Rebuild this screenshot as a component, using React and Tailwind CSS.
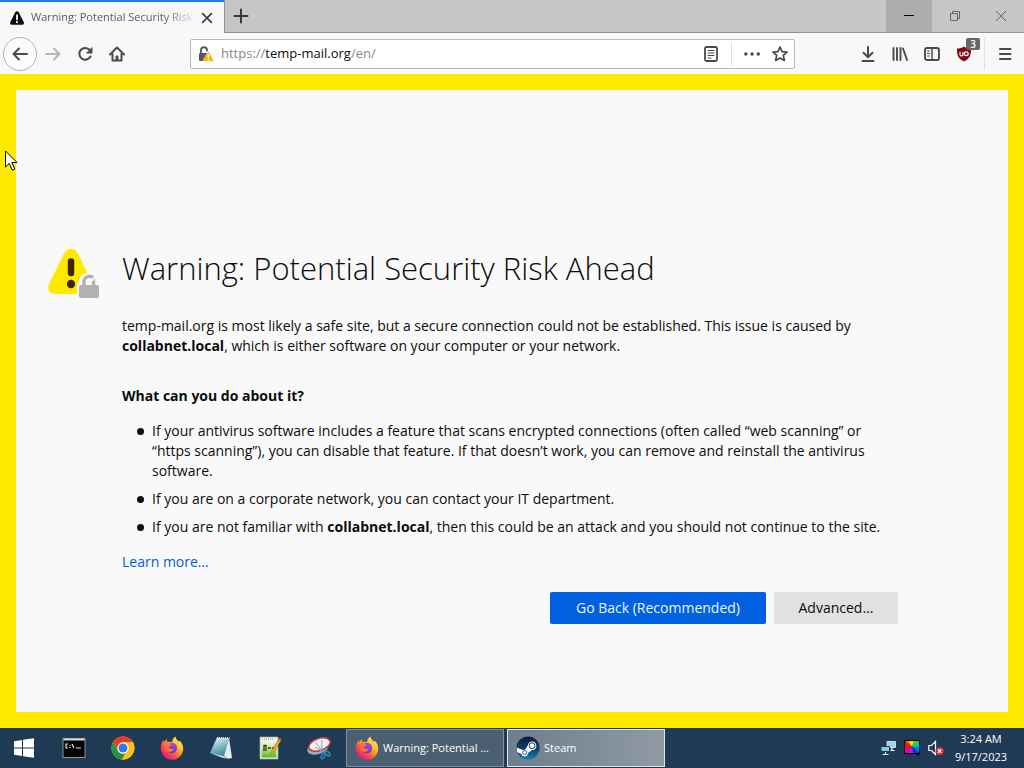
const TASKBAR_ICONS = [
    { label: 'Command Prompt', Icon: TerminalIcon },
    { label: 'Google Chrome', Icon: ChromeIcon },
    { label: 'Firefox', Icon: FirefoxIcon },
    { label: 'Notepad', Icon: NotepadIcon },
    { label: 'Notepad++', Icon: NotepadPlusIcon },
    { label: 'Snipping Tool', Icon: SnipIcon },
];

/* ---------- toolbar icons, drawn on a 16px grid ---------- */

function Glyph({ children, size = 'size-4' }) {
    return (
        <svg viewBox="0 0 16 16" className={size} fill="none" stroke="currentColor" strokeWidth="2" strokeLinecap="round" strokeLinejoin="round" aria-hidden="true">
            {children}
        </svg>
    );
}

function BlackWarningIcon() {
    return (
        <svg viewBox="0 0 16 16" className="size-4 shrink-0" aria-hidden="true">
            <path d="M8 1.200c.8 0 1.300.4 1.700 1.100l5 9.800c.7 1.400-.1 2.700-1.600 2.700H2.900c-1.500 0-2.300-1.300-1.600-2.700l5-9.800C6.700 1.600 7.200 1.200 8 1.200z" fill="#0c0c0d" />
            <path d="M8 5.200v4.200" stroke="#fff" strokeWidth="1.800" strokeLinecap="round" />
            <circle cx="8" cy="12.200" r="1.100" fill="#fff" />
        </svg>
    );
}

function LockWarningIcon() {
    return (
        <svg viewBox="0 0 16 16" className="size-4 shrink-0" aria-hidden="true">
            <path d="M3 8V4.400a3 3 0 0 1 6-.4v1.300" fill="none" stroke="#55595c" strokeWidth="1.900" />
            <rect x="1" y="7" width="9" height="8" rx="1.200" fill="#55595c" />
            <path d="M10.300 5.200 15.600 14.200q.3 1.100-.7 1.100H5.700q-1 0-.6-1.100z" fill="#f9b208" stroke="#f9f9fa" strokeWidth=".4" />
            <path d="M10.300 8.600v3" stroke="#fff" strokeWidth="1.400" strokeLinecap="round" />
            <circle cx="10.300" cy="13.500" r=".8" fill="#fff" />
        </svg>
    );
}

function ShieldIcon() {
    return (
        <svg viewBox="0 0 16 16" className="size-4" aria-hidden="true">
            <path d="M8 .6C6.200 2 3.600 2.600 1 2.600c0 6.200.6 9.800 7 13 6.400-3.200 7-6.800 7-13C12.400 2.600 9.800 2 8 .6z" fill="#800610" />
            <path d="M4 5.800v2.600a1.500 1.500 0 0 0 3 0V5.800" fill="none" stroke="#fff" strokeWidth="1.200" />
            <circle cx="10.300" cy="7.800" r="1.900" fill="none" stroke="#fff" strokeWidth="1.200" />
        </svg>
    );
}

/* ---------- page icon ---------- */

function InsecureSiteIcon() {
    return (
        <svg viewBox="0 0 52 52" className="size-[52px] shrink-0" aria-hidden="true">
            <path d="M23 1c3.400 0 5.300 1.400 6.800 4.200l14.800 30.600C47 41 44.500 46 39 46H7c-5.800 0-8.400-5-5.800-10.200L16.200 5.200C17.700 2.400 19.600 1 23 1z" fill="#ffe900" />
            <path d="M23 13.500v11.500" stroke="#3e2800" strokeWidth="6.500" strokeLinecap="round" />
            <circle cx="23" cy="36" r="4.200" fill="#3e2800" />
            <path d="M29 53V37q0-2.500 2-3c0-5 4-9.500 10-9.500S51 28 51 34l3 3v16z" fill="#f9f9fa" />
            <path d="M36 38v-4.300a5.500 5.500 0 0 1 9-4.200" fill="none" stroke="#b1b1b3" strokeWidth="3.400" />
            <path d="M43.500 33.500q2.500 0 3-3.500.8 1.500.8 3.500v4h-3z" fill="#b1b1b3" />
            <rect x="31" y="37" width="20" height="13" rx="2" fill="#b1b1b3" />
        </svg>
    );
}

function Cursor() {
    return (
        <svg viewBox="0 0 13 21" className="absolute left-[5px] top-[76px] z-10 h-[21px] w-[13px]" aria-hidden="true">
            <path d="M.5 1v16l3.700-3.600 3 6.700 2.600-1.100-3-6.500h5.200z" fill="#fff" stroke="#000" />
        </svg>
    );
}

/* ---------- taskbar icons ---------- */

function WindowsIcon() {
    return (
        <svg viewBox="0 0 22 22" className="size-[22px]" fill="#fff" aria-hidden="true">
            <path d="M1 4.200 9 3v7.500H1zM10 2.800 21 1.200v9.300H10zM1 11.500h8V19l-8-1.200zM10 11.500h11v9.300l-11-1.600z" />
        </svg>
    );
}

function TerminalIcon() {
    return (
        <svg viewBox="0 0 24 24" className="size-6" aria-hidden="true">
            <rect x="1" y="2.500" width="22" height="19" fill="#050505" stroke="#8c959c" />
            <path d="M1.500 3.500h21" stroke="#cfd6da" strokeWidth="2" />
            <path d="M6 8H4v4h2M8 9v1M8 11v1M10 8l2 4M14 12h5" fill="none" stroke="#e5e5e5" strokeWidth="1.200" />
        </svg>
    );
}

function ChromeIcon() {
    return (
        <svg viewBox="0 0 24 24" className="size-6" aria-hidden="true">
            <circle cx="12" cy="12" r="11.500" fill="#fbc116" />
            <path d="M2 6.300A11.500 11.500 0 0 1 22 6.300H12L7 14.800z" fill="#e33b2e" />
            <path d="M2 6.300 7 14.900c1.300 2 3 3 5 2.900l2-.4-3 6.100A11.500 11.500 0 0 1 2 6.300z" fill="#229342" />
            <path d="M12 6.300h10c2.700 5.200 1.200 11-3 14.500a11.500 11.500 0 0 1-8 2.700l6-8.600z" fill="#fbc116" />
            <circle cx="12" cy="12" r="5.700" fill="#fff" />
            <circle cx="12" cy="12" r="4.500" fill="#3478e5" />
        </svg>
    );
}

function FirefoxIcon() {
    return (
        <svg viewBox="0 0 24 24" className="size-6 shrink-0" aria-hidden="true">
            <defs>
                <linearGradient id="fox" x1=".85" y1=".1" x2=".2" y2=".9">
                    <stop offset="0" stopColor="#fff44f" />
                    <stop offset=".35" stopColor="#ffb02e" />
                    <stop offset=".65" stopColor="#ff5b36" />
                    <stop offset="1" stopColor="#e31587" />
                </linearGradient>
                <linearGradient id="globe" x1=".7" y1="0" x2=".3" y2="1">
                    <stop offset="0" stopColor="#a14df0" />
                    <stop offset="1" stopColor="#5b3bb8" />
                </linearGradient>
            </defs>
            <path d="M15.500.5c.2 2.500 2 3.700 3.700 5.600l.3-1.600c3 3 4.200 6.500 3.600 10A11.200 11.200 0 0 1 1 14.500C.3 10.500 1.400 7 3.500 4l.6 2.200L6.500 3l.8 3c1.600-.5 3.500-.3 4.800.2C12 3.800 13.500 1.800 15.500.5z" fill="url(#fox)" />
            <circle cx="12" cy="12" r="5.200" fill="url(#globe)" />
            <path d="M5 7.500c2-1 4.700-.6 6.500 1.500-.6 1.200-2 1.200-2.900 1.800.2 2 2.900 2.800 5.200 1.900-1 3.400-5 4.200-7.500 2.100C4.500 13 4.200 10 5 7.500z" fill="#ff7139" />
            <path d="M14 6c3 1 4.800 3.700 4.400 7.200 1.200-1 1.500-3.500.6-5.500L15.500 4z" fill="#ffcc38" />
        </svg>
    );
}

function NotepadIcon() {
    return (
        <svg viewBox="0 0 24 24" className="size-6" aria-hidden="true">
            <defs>
                <linearGradient id="pad" x1=".3" y1="0" x2=".7" y2="1">
                    <stop offset="0" stopColor="#d4eff4" />
                    <stop offset=".55" stopColor="#79b3c0" />
                    <stop offset="1" stopColor="#42818f" />
                </linearGradient>
            </defs>
            <path d="m20 2 3 20-4 .8L14 19z" fill="#e4edef" />
            <path d="M8 1.500 20.500 2 15 20 1 17z" fill="url(#pad)" />
            <path d="m1 17 14 3 4 2.800-6-1z" fill="#c1d9df" />
            <path d="M8 2h12.500" stroke="#e8f1f3" strokeWidth="1.500" strokeDasharray="1 1" />
        </svg>
    );
}

function NotepadPlusIcon() {
    return (
        <svg viewBox="0 0 24 24" className="size-6" aria-hidden="true">
            <defs>
                <linearGradient id="green" x1="0" y1="0" x2="0" y2="1">
                    <stop offset="0" stopColor="#f3f8e6" />
                    <stop offset=".4" stopColor="#c8e694" />
                    <stop offset="1" stopColor="#55b81f" />
                </linearGradient>
            </defs>
            <path d="M2 1h18v22H2z" fill="#f1f4ec" stroke="#9caf91" strokeWidth=".7" />
            <path d="M3.500 5h15v16.500h-15z" fill="url(#green)" />
            <path d="M4 3h12" stroke="#8c8c78" strokeDasharray="1 1" />
            <path d="M6 15V9.500h2V15M10 12h3M14 12h3" fill="none" stroke="#284018" strokeWidth="1.300" />
            <path d="m21.500 2 2 1.200-7 12.300-3 2 .6-3.200z" fill="#edaa2c" stroke="#9b6215" strokeWidth=".5" />
            <path d="m20.700 3.400 2 1.200 1-1.700-2-1.100z" fill="#c94b38" />
        </svg>
    );
}

function SnipIcon() {
    return (
        <svg viewBox="0 0 24 24" className="size-6" aria-hidden="true">
            <ellipse cx="11" cy="12" rx="11" ry="6" transform="rotate(-18 11 12)" fill="#9daeb8" />
            <ellipse cx="12.500" cy="8.500" rx="11" ry="6" transform="rotate(-18 12.500 8.500)" fill="#f5f5f5" stroke="#c8343c" strokeWidth="1.500" />
            <path d="m8 6 8 10M15 4l-.5 12M8 11l8 5" fill="none" stroke="#8995a0" strokeWidth="1" />
            <ellipse cx="16" cy="20" rx="1.600" ry="3" transform="rotate(25 16 20)" fill="none" stroke="#278dbb" strokeWidth="1.500" />
            <ellipse cx="20.500" cy="17.500" rx="1.600" ry="3" transform="rotate(-45 20.500 17.500)" fill="none" stroke="#278dbb" strokeWidth="1.500" />
        </svg>
    );
}

function SteamIcon() {
    return (
        <svg viewBox="0 0 24 24" className="size-6 shrink-0" aria-hidden="true">
            <defs>
                <linearGradient id="steam" x1="0" y1="0" x2="0" y2="1">
                    <stop offset="0" stopColor="#101d3f" />
                    <stop offset=".5" stopColor="#0b3a68" />
                    <stop offset="1" stopColor="#1584b8" />
                </linearGradient>
            </defs>
            <circle cx="12" cy="12" r="11.500" fill="url(#steam)" />
            <path d="m.7 11.500 6.600 2.700c.6-.4 1.200-.6 2-.6l2.500-4a4.300 4.300 0 1 1 4.200 4.500l-4 3a3.300 3.300 0 0 1-6.500.8l-4.300-1.800z" fill="#fff" />
            <circle cx="16.100" cy="9.700" r="2.900" fill="none" stroke="#173358" strokeWidth="1" />
            <circle cx="8.700" cy="16.600" r="2" fill="none" stroke="#173358" strokeWidth=".8" />
        </svg>
    );
}

function NetworkIcon() {
    return (
        <svg viewBox="0 0 16 16" className="size-4" aria-hidden="true">
            <path d="M7 1.500h8.500v6H7z" fill="#9fd2ef" stroke="#e6f2f8" strokeWidth=".8" />
            <path d="M1 6.500h8.500v5H1z" fill="#8dc8eb" stroke="#1f3a52" />
            <path d="M5.500 12v2M2.500 14.500h6M12 8v2M10.500 10.500h4" stroke="#fff" strokeWidth="1.200" />
        </svg>
    );
}

function ColorIcon() {
    return (
        <svg viewBox="0 0 16 16" className="size-4" aria-hidden="true">
            <path d="M0 0h16v14l-2 2-2-2H0z" fill="#080808" />
            <path d="M8 7 1 1h5z" fill="#ff7b00" />
            <path d="M8 7 5 1h5z" fill="#ffe600" />
            <path d="m8 7 2-6h5v2z" fill="#42d51c" />
            <path d="m8 7 7-5v6z" fill="#00c9a7" />
            <path d="m8 7 7 0v6z" fill="#0078ff" />
            <path d="m8 7 7 6H8z" fill="#2b1fe8" />
            <path d="m8 7 1 6H3z" fill="#bd18ed" />
            <path d="m8 7-5 6H1V8z" fill="#f000a0" />
            <path d="M8 7 1 9V1z" fill="#f31313" />
        </svg>
    );
}

function MutedIcon() {
    return (
        <svg viewBox="0 0 16 16" className="size-4" aria-hidden="true">
            <path d="M.8 5.500h2.700l4-4v13l-4-4H.8z" fill="none" stroke="#fff" strokeWidth="1.200" />
            <circle cx="11.700" cy="11" r="4.300" fill="#d32b3b" />
            <path d="m10 9.300 3.400 3.400m0-3.400L10 12.700" stroke="#fff" strokeWidth="1.300" />
        </svg>
    );
}

/* ---------- layout ---------- */

function ToolButton({ label, className = '', children }) {
    return (
        <button type="button" aria-label={label} className={`flex h-8 w-8 shrink-0 items-center justify-center ${className}`}>
            {children}
        </button>
    );
}

function TabBar() {
    return (
        <div className="flex h-[33px] bg-[#c6c6c6]">
            <div className="flex w-56 shrink-0 items-center border-t-2 border-[#1a7cf0] bg-[#f7f7f8] pl-[9px]">
                <BlackWarningIcon />
                <div className="ml-[6px] w-[166px] overflow-hidden whitespace-nowrap mask-r-from-80% text-[11px] text-[#5b5b5d]">
                    Warning: Potential Security Risk
                </div>
                <button type="button" aria-label="Close tab" className="ml-0.5 flex size-4 items-center justify-center text-[#3c3c3d]">
                    <Glyph size="size-3.5"><path d="m3 3 10 10M13 3 3 13" strokeWidth="1.900" /></Glyph>
                </button>
            </div>
            <div className="flex flex-1 border-b border-l border-[#929292]">
                <button type="button" aria-label="New tab" className="flex w-8 items-center justify-center text-[#38383a]">
                    <Glyph><path d="M8 1.500v13M1.500 8h13" /></Glyph>
                </button>
                <div className="ml-auto flex text-[#6c6471]">
                    <button type="button" aria-label="Minimize" className="flex w-[46px] items-center justify-center bg-[#adadad] text-black">
                        <svg viewBox="0 0 10 10" className="size-2.5"><path d="M0 4.500h10" stroke="currentColor" /></svg>
                    </button>
                    <button type="button" aria-label="Restore" className="flex w-[46px] items-center justify-center">
                        <svg viewBox="0 0 10 10" className="size-2.5" fill="none" stroke="currentColor"><path d="M.5 2.500h7v7h-7zM2.500 2.500v-2h7v7h-2" /></svg>
                    </button>
                    <button type="button" aria-label="Close" className="flex w-[46px] items-center justify-center">
                        <svg viewBox="0 0 10 10" className="size-2.5" fill="none" stroke="currentColor"><path d="m0 0 10 10M10 0 0 10" /></svg>
                    </button>
                </div>
            </div>
        </div>
    );
}

function NavBar() {
    return (
        <div className="flex h-[41px] items-center bg-[#f8f8f9] px-[3px] text-[#4a4a4c]">
            <button type="button" aria-label="Back" className="flex size-[34px] shrink-0 items-center justify-center rounded-full border border-[#b4b4b4] bg-[#fcfcfc]">
                <Glyph><path d="M15 8H1.500M7 2.500 1.500 8 7 13.500" /></Glyph>
            </button>
            <ToolButton label="Forward" className="text-[#b5b5b6]">
                <Glyph><path d="M1 8h13.500M9 2.500 14.500 8 9 13.500" /></Glyph>
            </ToolButton>
            <ToolButton label="Reload">
                <Glyph>
                    <path d="M13.500 10.500A5.900 5.900 0 1 1 12.800 4" />
                    <path d="M15 2v5h-5z" fill="currentColor" strokeWidth="1" />
                </Glyph>
            </ToolButton>
            <ToolButton label="Home">
                <Glyph>
                    <path d="M1 8.500 8 1.500l7 7M3.500 8v6.500h9V8" />
                    <path d="M7.500 14v-3.500h1V14" />
                </Glyph>
            </ToolButton>

            <div className="mx-[57px] flex h-[30px] min-w-0 flex-1 items-center rounded-[2px] border border-[#b9b9ba] bg-white pl-[7px]">
                <LockWarningIcon />
                {/* the host is darker than the rest of the address */}
                <div role="textbox" aria-label="Address" className="ml-[7px] flex-1 truncate text-[13px] text-[#87878a]">
                    https://<span className="text-[#0c0c0d]">temp-mail.org</span>/en/
                </div>
                <ToolButton label="Reader view">
                    <Glyph>
                        <rect x="2" y="1" width="12" height="14" rx="1.500" strokeWidth="1.800" />
                        <path d="M5 4.500h6M5 7h6M5 9.500h6M5 12h3" strokeWidth="1" />
                    </Glyph>
                </ToolButton>
                <div className="mx-1 h-6 w-px bg-[#dededf]"></div>
                <ToolButton label="Page actions">
                    <Glyph size="size-[18px]">
                        <path d="M2.500 8h.1M8 8h.1M13.500 8h.1" strokeWidth="3" />
                    </Glyph>
                </ToolButton>
                <button type="button" aria-label="Bookmark" className="mr-0.5 flex w-6 justify-center">
                    <Glyph><path d="m8 1 2.100 4.600 4.900.5-3.700 3.300 1.100 5L8 11.900l-4.400 2.500 1.100-5L1 6.100l4.900-.5z" strokeWidth="1.700" /></Glyph>
                </button>
            </div>

            <ToolButton label="Downloads">
                <Glyph><path d="M8 1v10M3.500 6.700 8 11.200l4.500-4.500M2.500 15h11" /></Glyph>
            </ToolButton>
            <ToolButton label="Library">
                <Glyph><path d="M1.500 2v12M5 2v12M8.500 2v12M11 2.500l4 11.500" strokeWidth="1.900" /></Glyph>
            </ToolButton>
            <ToolButton label="Sidebars">
                <Glyph>
                    <rect x="1" y="2" width="14" height="12" rx="2" strokeWidth="1.900" />
                    <path d="M8 2v12" strokeWidth="1.500" />
                    <path d="M3.500 5h2M3.500 7.500h2M3.500 10h2" strokeWidth="1" />
                </Glyph>
            </ToolButton>
            <ToolButton label="uBlock Origin" className="relative">
                <ShieldIcon />
                <span className="absolute right-0 top-0 h-3 w-3.5 rounded-[2px] bg-[#666] text-center text-[10px] font-semibold leading-3 text-white">3</span>
            </ToolButton>
            <div className="mx-1 h-8 w-px bg-[#e0e0e1]"></div>
            <ToolButton label="Menu">
                <Glyph><path d="M3 3h10.500M3 8h10.500M3 13h10.500" /></Glyph>
            </ToolButton>
        </div>
    );
}

function Bullet({ children }) {
    return (
        <li className="relative before:absolute before:-left-[15px] before:top-[7px] before:size-[7px] before:rounded-full before:bg-[#0c0c0d]">
            {children}
        </li>
    );
}

function WarningPage() {
    return (
        <main className="relative flex flex-1 flex-col justify-center border-16 border-[#ffeb00] bg-[#f9f9fa] px-8 pt-[70px] text-[#0c0c0d]">
            <div className="flex max-w-[850px] gap-[22px]">
                <InsecureSiteIcon />
                <div className="flex-1 text-sm leading-5">
                    <h1 className="text-[31px] font-light leading-10">Warning: Potential Security Risk Ahead</h1>
                    <p className="mt-7">
                        temp-mail.org is most likely a safe site, but a secure connection could not be established. This issue is caused by <b>collabnet.local</b>, which is either software on your computer or your network.
                    </p>
                    <h2 className="mt-[30px] font-bold">What can you do about it?</h2>
                    <ul className="mt-[15px] flex flex-col gap-2 pl-[30px]">
                        <Bullet>
                            If your antivirus software includes a feature that scans encrypted connections (often called “web scanning” or “https scanning”), you can disable that feature. If that doesn’t work, you can remove and reinstall the antivirus software.
                        </Bullet>
                        <Bullet>If you are on a corporate network, you can contact your IT department.</Bullet>
                        <Bullet>If you are not familiar with <b>collabnet.local</b>, then this could be an attack and you should not continue to the site.</Bullet>
                    </ul>
                    <a href="#learn-more" className="mt-[15px] block w-fit text-[#0060cf]">Learn more…</a>
                    <div className="mt-5 flex justify-end gap-2">
                        <button type="button" className="h-8 w-[216px] rounded-[2px] bg-[#0060e0] text-[#eaf8ff]">Go Back (Recommended)</button>
                        <button type="button" className="h-8 w-[124px] rounded-[2px] bg-[#e1e1e2]">Advanced...</button>
                    </div>
                </div>
            </div>
        </main>
    );
}

function Taskbar() {
    return (
        <footer className="flex h-10 items-center bg-[#1f3a54] text-[11px] text-white">
            <button type="button" aria-label="Start" className="flex w-12 justify-center"><WindowsIcon /></button>
            {TASKBAR_ICONS.map(({ label, Icon }) =>
                <button key={label} type="button" aria-label={label} className="flex w-[49px] justify-center pl-[3px]">
                    <Icon />
                </button>
            )}
            <button type="button" className="ml-1 flex h-[38px] w-[158px] items-center gap-1 border border-[#7e8f9d] bg-[#4a6072] pl-2">
                <FirefoxIcon />
                <span className="whitespace-nowrap">Warning: Potential ...</span>
            </button>
            <button type="button" className="ml-[3px] flex h-[38px] w-[158px] items-center gap-1 border border-[#dfe5e9] bg-linear-to-r from-[#6e7e8b] to-[#909aa4] pl-2">
                <SteamIcon />
                <span>Steam</span>
            </button>
            <div className="ml-auto flex items-center gap-2 pr-3.5">
                <NetworkIcon />
                <ColorIcon />
                <MutedIcon />
                <div className="w-[58px] text-center leading-[18px]">
                    <div>3:24 AM</div>
                    <div>9/17/2023</div>
                </div>
            </div>
        </footer>
    );
}

function App() {
    return (
        <div className="flex min-h-screen flex-col font-['Open_Sans','Noto_Sans',sans-serif]">
            <TabBar />
            <NavBar />
            <div className="relative flex flex-1 flex-col">
                <Cursor />
                <WarningPage />
            </div>
            <Taskbar />
        </div>
    );
}

export default App;
